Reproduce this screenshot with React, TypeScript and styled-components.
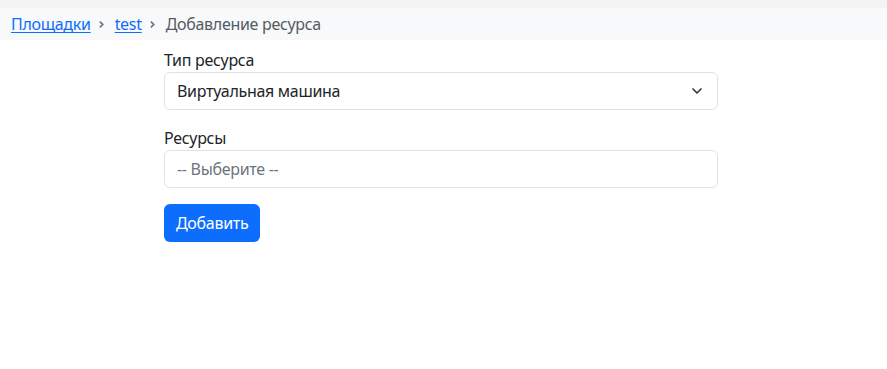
import React from 'react';
import styled, {createGlobalStyle} from 'styled-components';

const GlobalStyle = createGlobalStyle`
  html, body {
    margin: 0;
    padding: 0;
    background: #ffffff;
  }
  body {
    font-family: "Noto Sans", "Open Sans", sans-serif;
    font-size: 16px;
    letter-spacing: -0.3px;
    color: #212529;
  }
  * {
    box-sizing: border-box;
  }
`

const TopStrip = styled.div`
  height: 8px;
  background: #f4f4f4;
`

const Breadcrumbs = styled.nav`
  display: flex;
  align-items: center;
  height: 32px;
  padding: 0 11px;
  background: #f8f9fa;
  font-size: 16px;
`

const Crumb = styled.a`
  color: #0d6efd;
  text-decoration: underline;
  text-underline-offset: 2px;
`

const Current = styled.span`
  color: #555b61;
`

const Divider = styled.span`
  display: inline-flex;
  margin: 1px 11px 0 8px;
  color: #6c757d;
`

const Form = styled.form`
  width: 554px;
  margin: 8px 0 0 164px;
  display: flex;
  flex-direction: column;
  align-items: flex-start;
`

const Group = styled.div`
  width: 100%;
  margin-bottom: 16px;
`

const Label = styled.label`
  display: block;
  line-height: 24px;
  margin-bottom: 0;
`

const Field = styled.div`
  display: flex;
  align-items: center;
  height: 38px;
  padding: 0 15px 0 12px;
  border: 1px solid #dee2e6;
  border-radius: 6px;
  background: #fff;
`

const FieldText = styled.span<{ $muted?: boolean }>`
  flex: 1;
  color: ${p => (p.$muted ? '#6c757d' : '#212529')};
`

const Button = styled.button`
  height: 38px;
  padding: 0 12px;
  border: none;
  border-radius: 6px;
  background: #0d6efd;
  color: #fff;
  font-family: inherit;
  font-size: 16px;
  letter-spacing: -0.3px;
`

const Chevron = () => (
    <svg width="5" height="7" viewBox="0 0 5 7">
        <path d="M0.8 0.6 L3.8 3.5 L0.8 6.4" fill="none" stroke="currentColor" strokeWidth="1.7"/>
    </svg>
)

const SelectArrow = () => (
    <svg width="10" height="7" viewBox="0 0 10 7">
        <path d="M1 1 L5 5 L9 1" fill="none" stroke="#343a40" strokeWidth="1.7" strokeLinecap="round"
              strokeLinejoin="round"/>
    </svg>
)

export default function App() {
    return (
        <>
            <GlobalStyle/>
            <TopStrip/>
            <Breadcrumbs>
                <Crumb href={'#'}>Площадки</Crumb>
                <Divider><Chevron/></Divider>
                <Crumb href={'#'}>test</Crumb>
                <Divider><Chevron/></Divider>
                <Current>Добавление ресурса</Current>
            </Breadcrumbs>
            <Form>
                <Group>
                    <Label>Тип ресурса</Label>
                    <Field>
                        <FieldText>Виртуальная машина</FieldText>
                        <SelectArrow/>
                    </Field>
                </Group>
                <Group>
                    <Label>Ресурсы</Label>
                    <Field>
                        <FieldText $muted>-- Выберите --</FieldText>
                    </Field>
                </Group>
                <Button type={'button'}>Добавить</Button>
            </Form>
        </>
    );
}
